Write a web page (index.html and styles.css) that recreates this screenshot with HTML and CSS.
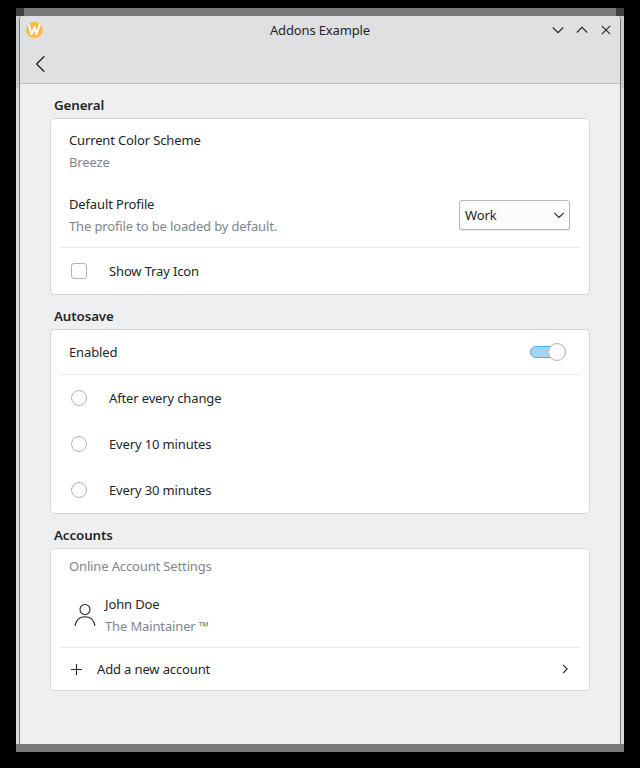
FILE: index.html
```html
<!DOCTYPE html>
<html lang="en">
<head>
<meta charset="utf-8">
<title>Addons Example</title>
<link rel="stylesheet" href="styles.css">
</head>
<body>
<div class="shadow-frame">
<div class="window">
  <header class="header">
    <div class="titlebar">
      <svg class="logo" width="18" height="18" viewBox="0 0 18 18"><circle cx="8.500" cy="9" r="8.3" fill="#fbb944"/><path d="M3 4.300 5.400 13.200 8.700 6.200 10.300 13.200 13.800 3.500" fill="none" stroke="#fff" stroke-width="2.1" stroke-linejoin="round" stroke-linecap="round"/></svg>
      <h1 class="title">Addons Example</h1>
      <div class="controls">
        <svg width="16" height="16" viewBox="0 0 16 16"><path d="M2.800 5.500 8 10.700l5.200-5.200"/></svg>
        <svg width="16" height="16" viewBox="0 0 16 16"><path d="M2.800 10.500 8 5.300l5.200 5.200"/></svg>
        <svg width="16" height="16" viewBox="0 0 16 16"><path d="m3.800 3.800 8.400 8.400m0-8.400-8.400 8.400"/></svg>
      </div>
    </div>
    <div class="toolbar">
      <svg width="22" height="22" viewBox="0 0 22 22"><path d="M15.300 3.300 7.600 11l7.700 7.700"/></svg>
    </div>
  </header>
  <main class="page">
    <h2 class="heading">General</h2>
    <section class="card">
      <div class="row tall"><div class="text"><span>Current Color Scheme</span><span class="muted">Breeze</span></div></div>
      <div class="row tall">
        <div class="text"><span>Default Profile</span><span class="muted">The profile to be loaded by default.</span></div>
        <div class="combo"><span>Work</span><svg width="12" height="12" viewBox="0 0 12 12"><path d="m1.300 3.800 4.700 4.700 4.700-4.700"/></svg></div>
      </div>
      <div class="separator"></div>
      <div class="row option"><span class="check"></span><span>Show Tray Icon</span></div>
    </section>
    <h2 class="heading">Autosave</h2>
    <section class="card">
      <div class="row enabled"><span>Enabled</span><span class="switch"><span class="knob"></span></span></div>
      <div class="separator"></div>
      <div class="row option"><span class="check radio"></span><span>After every change</span></div>
      <div class="row option"><span class="check radio"></span><span>Every 10 minutes</span></div>
      <div class="row option"><span class="check radio"></span><span>Every 30 minutes</span></div>
    </section>
    <h2 class="heading">Accounts</h2>
    <section class="card">
      <div class="row caption muted">Online Account Settings</div>
      <div class="row tall">
        <svg class="avatar" width="32" height="32" viewBox="0 0 32 32"><circle cx="16" cy="10.500" r="5"/><path d="M6 27C7 21 11 17.700 16 17.700S25 21 26 27"/></svg>
        <div class="text"><span>John Doe</span><span class="muted">The Maintainer ™</span></div>
      </div>
      <div class="separator"></div>
      <div class="row add">
        <svg width="16" height="16" viewBox="0 0 16 16"><path d="M7.500 3v11M2 8.500h11" /></svg>
        <span>Add a new account</span>
        <svg class="go" width="10" height="10" viewBox="0 0 10 10"><path d="m3 .8 4.200 4.200L3 9.200"/></svg>
      </div>
    </section>
  </main>
</div>
</div>
</body>
</html>
```
FILE: styles.css
```css
* { box-sizing: border-box; }
body {
  margin: 0;
  height: 768px;
  padding: 8px 16px 16px;
  background: #000;
  color: #232629;
  font: 13px/22px "Noto Sans", sans-serif;
  letter-spacing: -0.14px;
  overflow: hidden;
}
h1, h2 { margin: 0; font-size: inherit; }
svg { display: block; flex: none; fill: none; stroke: #232629; stroke-width: 1.1; }
.shadow-frame {
  height: 744px;
  padding: 8px 3px;
  background:
    linear-gradient(90deg, #414141 8px, #777879 8px, #777879 600px, #414141 600px) top / 100% 8px no-repeat,
    linear-gradient(#777879, #777879) bottom / 100% 8px no-repeat,
    linear-gradient(#c8cacc 80px, #d7dadc 80px);
}
.window {
  height: 728px;
  border: solid #727476;
  border-width: 0 1px;
  background: #eeeff1;
  border-radius: 4px 4px 0 0;
}
.header { height: 68px; background: #dee0e2; border-bottom: 1px solid #bfc1c3; border-radius: 3px 3px 0 0; }
.titlebar { display: grid; grid-template-columns: 64px 1fr 64px; align-items: center; height: 28px; padding: 0 6px; }
.logo { stroke: none; }
.title { font-weight: 400; text-align: center; }
.controls { display: flex; gap: 8px; }
.toolbar { height: 39px; padding: 9px; }
.toolbar svg { stroke-width: 1.4; }
.page { padding: 10px 30px 0; }
.heading { height: 22px; margin: 0 4px 2px; font-size: 13.33px; font-weight: 600; letter-spacing: -0.1px; }
.card { margin-bottom: 10px; border: 1px solid #d5d8da; border-radius: 4px; background: #fff; }
.row { display: flex; align-items: center; padding: 0 18px; }
.tall { height: 64px; }
.text { display: flex; flex-direction: column; flex: 1; }
.muted { color: #7f858e; }
.separator { height: 1px; margin: 0 9px; background: #e9eaeb; }
.option { height: 46px; gap: 22px; }
.check { width: 16px; height: 16px; margin-left: 2px; border: 1px solid #b1b3b5; border-radius: 3px; background: #fff; }
.radio { border-radius: 50%; }
.combo {
  display: flex;
  align-items: center;
  justify-content: space-between;
  width: 111px;
  height: 30px;
  margin-right: 1px;
  padding: 0 4px 0 5px;
  border: 1px solid #b6b8ba;
  border-radius: 3px;
  background: #fcfcfc;
  box-shadow: 0 1px 0 #e5e6e7;
}
.enabled { height: 44px; justify-content: space-between; }
.switch { display: flex; align-items: center; justify-content: flex-end; width: 36px; height: 12px; margin-right: 5px; border: 1px solid #4faedf; border-radius: 6px; background: #9ed6f4; }
.knob { flex: none; width: 18px; height: 18px; margin-right: -1px; border: 1px solid #b5b7b9; border-radius: 50%; background: #fcfcfc; }
.caption { height: 34px; }
.avatar { margin-right: 4px; }
.add { height: 42px; }
.add span { flex: 1; margin-left: 12px; }
.go { margin-right: 1px; }
```
